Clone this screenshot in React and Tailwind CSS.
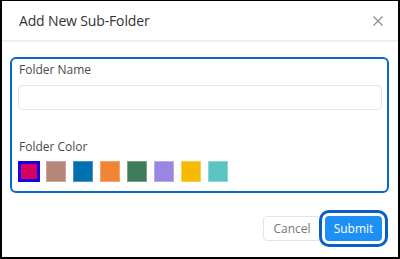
import React from "react";

const colors = [
  { bg: "bg-[#d6005f]", border: "border-[#d6005f]" },
  { bg: "bg-[#b5877b]", border: "border-[#c9a59b]" },
  { bg: "bg-[#0070b0]", border: "border-[#4a97c7]" },
  { bg: "bg-[#f08536]", border: "border-[#f3a56c]" },
  { bg: "bg-[#3d7b5a]", border: "border-[#7ba38c]" },
  { bg: "bg-[#9a85e2]", border: "border-[#b8a8ee]" },
  { bg: "bg-[#f6bb00]", border: "border-[#f8cf4d]" },
  { bg: "bg-[#5bc4c2]", border: "border-[#8dd6d4]" },
];

export default function App() {
  return (
    <div
      className="w-[400px] h-[259px] bg-white border-l-2 border-r-2 border-b-2 border-t border-black flex flex-col"
      style={{ fontFamily: '"Open Sans", "Noto Sans", sans-serif' }}
    >
      <div className="h-[41px] shrink-0 flex items-center justify-between pl-[17px] pr-[14px] border-b-2 border-[#f0f0f0]">
        <span className="text-[14px] text-[#333] tracking-[-0.15px]">Add New Sub-Folder</span>
        <svg width="12" height="12" viewBox="0 0 12 12" className="mt-[1px]">
          <path d="M1.5 1.5 L10.5 10.5 M10.5 1.5 L1.5 10.5" stroke="#8a8a8a" strokeWidth="1.2" fill="none" />
        </svg>
      </div>
      <div className="pt-[15px] pl-[8px] pr-[9px]">
        <div className="border-2 border-[#0a66c8] rounded-[6px] h-[136px] pl-[6px] pr-[5px] pt-[2px]">
          <div className="text-[12px] text-[#4a4a4a] leading-[18px] pl-[1px]">Folder Name</div>
          <div className="mt-[6px] h-[25px] border border-[#e6e6e6] rounded-[4px]" />
          <div className="mt-[28px] text-[12px] text-[#4a4a4a] leading-[18px] pl-[1px]">Folder Color</div>
          <div className="mt-[5px] flex gap-[7px] pl-[1px]">
            {colors.map((c, i) =>
              i === 0 ? (
                <div
                  key={i}
                  className="w-[22px] h-[21px] bg-[#d6005f] border-[3px] border-[#1a00e6] -ml-[1px] -mr-[1px]"
                />
              ) : (
                <div key={i} className={`w-[20px] h-[21px] border ${c.bg} ${c.border}`} />
              )
            )}
          </div>
        </div>
      </div>
      <div className="flex justify-end gap-[4px] pr-[16px] pt-[23px]">
        <button className="w-[58px] h-[25px] border border-[#e4e4e4] rounded-[4px] text-[12px] text-[#777] bg-white">
          Cancel
        </button>
        <button className="w-[57px] h-[25px] rounded-[4px] text-[12px] text-white bg-[#1e8ff5] outline-[3px] outline-solid outline-[#0a5ec8] outline-offset-[3px]">
          Submit
        </button>
      </div>
    </div>
  );
}
